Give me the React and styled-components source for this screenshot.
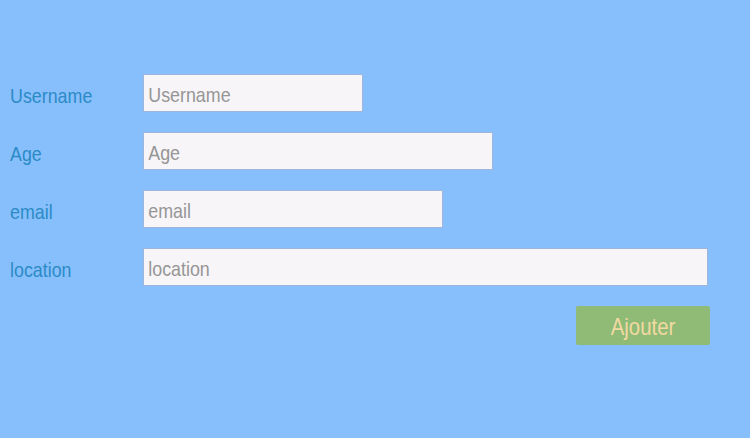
import styled, { createGlobalStyle } from 'styled-components';

const GlobalStyle = createGlobalStyle`
  html, body {
    margin: 0;
    padding: 0;
    background-color: #87bffd;
    font-family: "Liberation Sans", Arial, sans-serif;
  }
`;

const Page = styled.div`
  width: 750px;
  height: 438px;
  background-color: #87bffd;
  padding: 74px 0 0 10px;
  box-sizing: border-box;
`;

const Form = styled.form`
  display: flex;
  flex-direction: column;
  gap: 20px;
  width: 700px;
`;

const Row = styled.div`
  display: flex;
  align-items: center;
`;

const Label = styled.label`
  width: 133px;
  font-size: 21px;
  color: #2b8bc6;
  padding-top: 5px;
`;

// the text in the picture is drawn narrow, so squeeze it
const Narrow = styled.span`
  display: inline-block;
  transform: scaleX(0.85);
  transform-origin: ${props => (props.$center ? 'center' : 'left')};
  white-space: nowrap;
`;

const Field = styled.div`
  width: ${props => props.$width}px;
  height: 38px;
  box-sizing: border-box;
  border: 1px solid #9fb6da;
  background-color: #f7f5f8;
  overflow: hidden;
`;

const Input = styled.input`
  width: 117.6%;
  height: 100%;
  box-sizing: border-box;
  border: 0;
  background: transparent;
  padding: 4px 0 0 5px;
  font-family: "Liberation Sans", Arial, sans-serif;
  font-size: 21px;
  color: #555;
  outline: none;
  transform: scaleX(0.85);
  transform-origin: left;

  &::placeholder {
    color: #969696;
  }
`;

const Actions = styled.div`
  display: flex;
  justify-content: flex-end;
`;

const AddButton = styled.button`
  width: 134px;
  height: 39px;
  border: 0;
  border-radius: 2px;
  background-color: #8fbb76;
  color: #f3d9a2;
  font-family: "Liberation Sans", Arial, sans-serif;
  font-size: 24px;
  padding: 2px 0 0;
  cursor: pointer;
`;

const fields = [
  { name: 'Username', width: 220 },
  { name: 'Age', width: 350 },
  { name: 'email', width: 300 },
  { name: 'location', width: 565 },
];

function App() {
  return (
    <Page>
      <GlobalStyle />
      <Form onSubmit={e => e.preventDefault()}>
        {fields.map(f => (
          <Row key={f.name}>
            <Label htmlFor={f.name}><Narrow>{f.name}</Narrow></Label>
            <Field $width={f.width}>
              <Input id={f.name} type="text" placeholder={f.name} />
            </Field>
          </Row>
        ))}
        <Actions>
          <AddButton type="submit"><Narrow $center>Ajouter</Narrow></AddButton>
        </Actions>
      </Form>
    </Page>
  );
}

export default App;
